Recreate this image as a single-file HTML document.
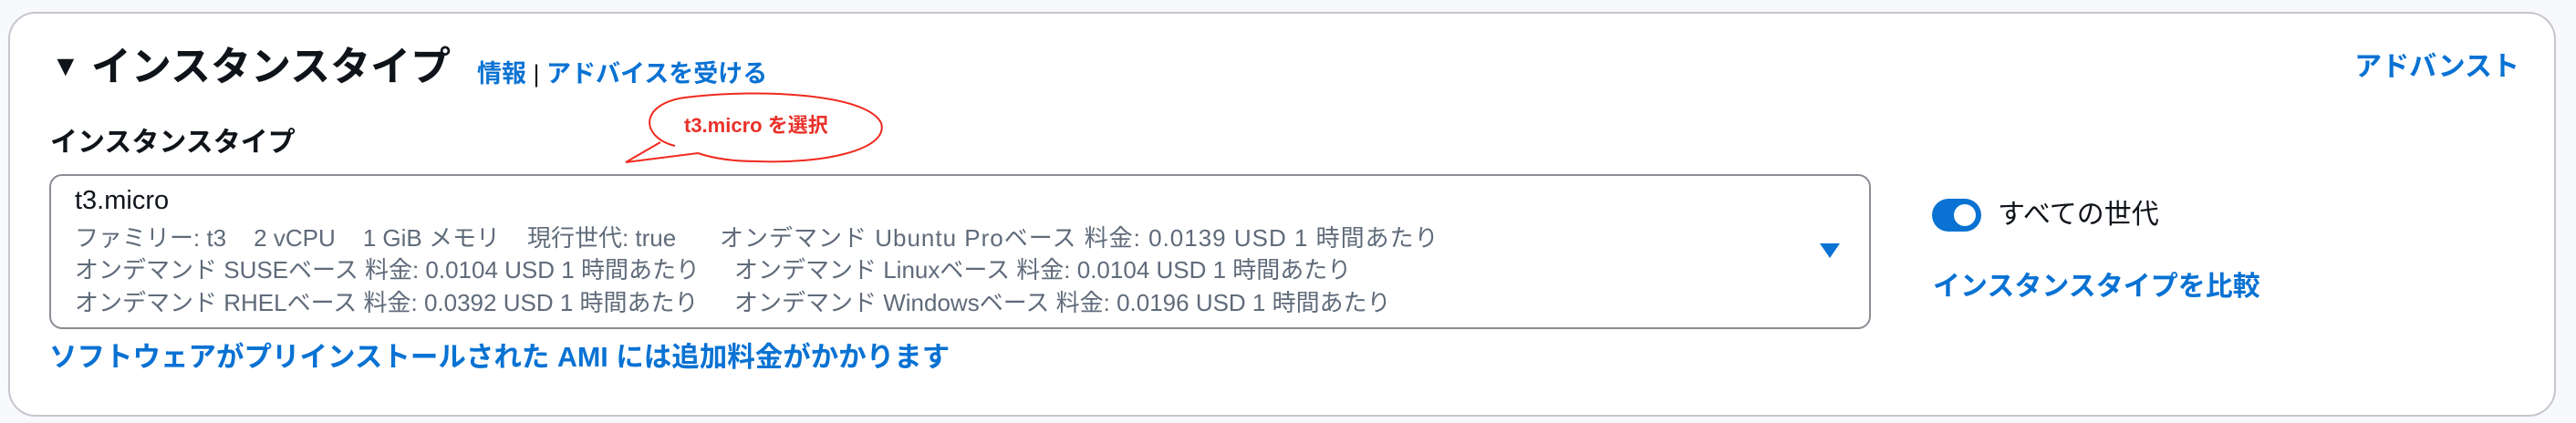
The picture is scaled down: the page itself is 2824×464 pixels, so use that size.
<!DOCTYPE html>
<html><head><meta charset="utf-8"><style>
html,body{margin:0;padding:0;width:2824px;height:464px;background:#f8f9fc;overflow:hidden;font-family:"Liberation Sans","Noto Sans CJK JP",sans-serif;}
.card{position:absolute;left:9px;top:13px;width:2793px;height:444px;box-sizing:border-box;border:2px solid #c6c6cd;border-radius:30px;background:#fff;}
.a{position:absolute;white-space:nowrap;}
.blue{color:#0972d3;font-weight:bold;}
.dark{color:#0f141a;}
.sel{position:absolute;left:54px;top:191px;width:1997px;height:170px;box-sizing:border-box;border:2px solid #8c8c94;border-radius:14px;background:#fff;}
.g{color:#5f6b7a;font-size:26px;}
</style></head><body>
<div class="card"></div>
<div class="a dark" style="left:56px;top:48px;font-size:44px;font-weight:bold;line-height:52px;"><span style="font-size:32px;position:relative;top:-5px;">▼</span> インスタンスタイプ</div>
<div class="a blue" style="left:523px;top:65px;font-size:27px;line-height:32px;">情報 <span class="dark" style="font-weight:normal">|</span> アドバイスを受ける</div>
<div class="a blue" style="right:62px;top:56px;font-size:30px;line-height:36px;">アドバンスト</div>
<div class="a dark" style="left:55px;top:139px;font-size:30px;font-weight:bold;line-height:36px;">インスタンスタイプ</div>
<svg class="a" style="left:680px;top:100px" width="300" height="84" viewBox="680 100 300 84">
<path d="M740,160 C700,150 700,110 760,106 C830,98 950,102 966,135 C975,165 900,180 830,177 C800,177 780,173 765,168 L686,178 L724,156" fill="#fff" stroke="#f02a1e" stroke-width="2"/>
</svg>
<div class="a" style="left:750px;top:124px;font-size:22px;font-weight:bold;color:#e8322a;line-height:28px;">t3.micro を選択</div>
<div class="sel"></div>
<div class="a dark" style="left:82px;top:203px;font-size:29px;line-height:34px;">t3.micro</div>
<div class="a g" style="left:82px;top:245px;line-height:32px;">ファミリー: t3<span style="margin-left:30px">2 vCPU</span><span style="margin-left:30px">1 GiB メモリ</span><span style="margin-left:30px">現行世代: true</span></div>
<div class="a g" style="left:789px;top:245px;line-height:32px;letter-spacing:1px;">オンデマンド Ubuntu Proベース 料金: 0.0139 USD 1 時間あたり</div>
<div class="a g" style="left:82px;top:280px;line-height:32px;">オンデマンド SUSEベース 料金: 0.0104 USD 1 時間あたり</div>
<div class="a g" style="left:805px;top:280px;line-height:32px;">オンデマンド Linuxベース 料金: 0.0104 USD 1 時間あたり</div>
<div class="a g" style="left:82px;top:316px;line-height:32px;">オンデマンド RHELベース 料金: 0.0392 USD 1 時間あたり</div>
<div class="a g" style="left:805px;top:316px;line-height:32px;">オンデマンド Windowsベース 料金: 0.0196 USD 1 時間あたり</div>
<svg class="a" style="left:1994px;top:266px" width="24" height="18"><path d="M1,1 L23,1 L12,17 Z" fill="#0972d3"/></svg>
<div class="a blue" style="left:54px;top:373px;font-size:30.5px;line-height:38px;">ソフトウェアがプリインストールされた AMI には追加料金がかかります</div>
<svg class="a" style="left:2118px;top:218px" width="54" height="36"><rect x="0" y="0" width="54" height="36" rx="18" fill="#0972d3"/><circle cx="36" cy="18" r="12" fill="#fff"/></svg>
<div class="a dark" style="left:2190px;top:217px;font-size:30px;line-height:38px;">すべての世代</div>
<div class="a blue" style="left:2119px;top:296px;font-size:30px;line-height:38px;">インスタンスタイプを比較</div>
</body></html>
